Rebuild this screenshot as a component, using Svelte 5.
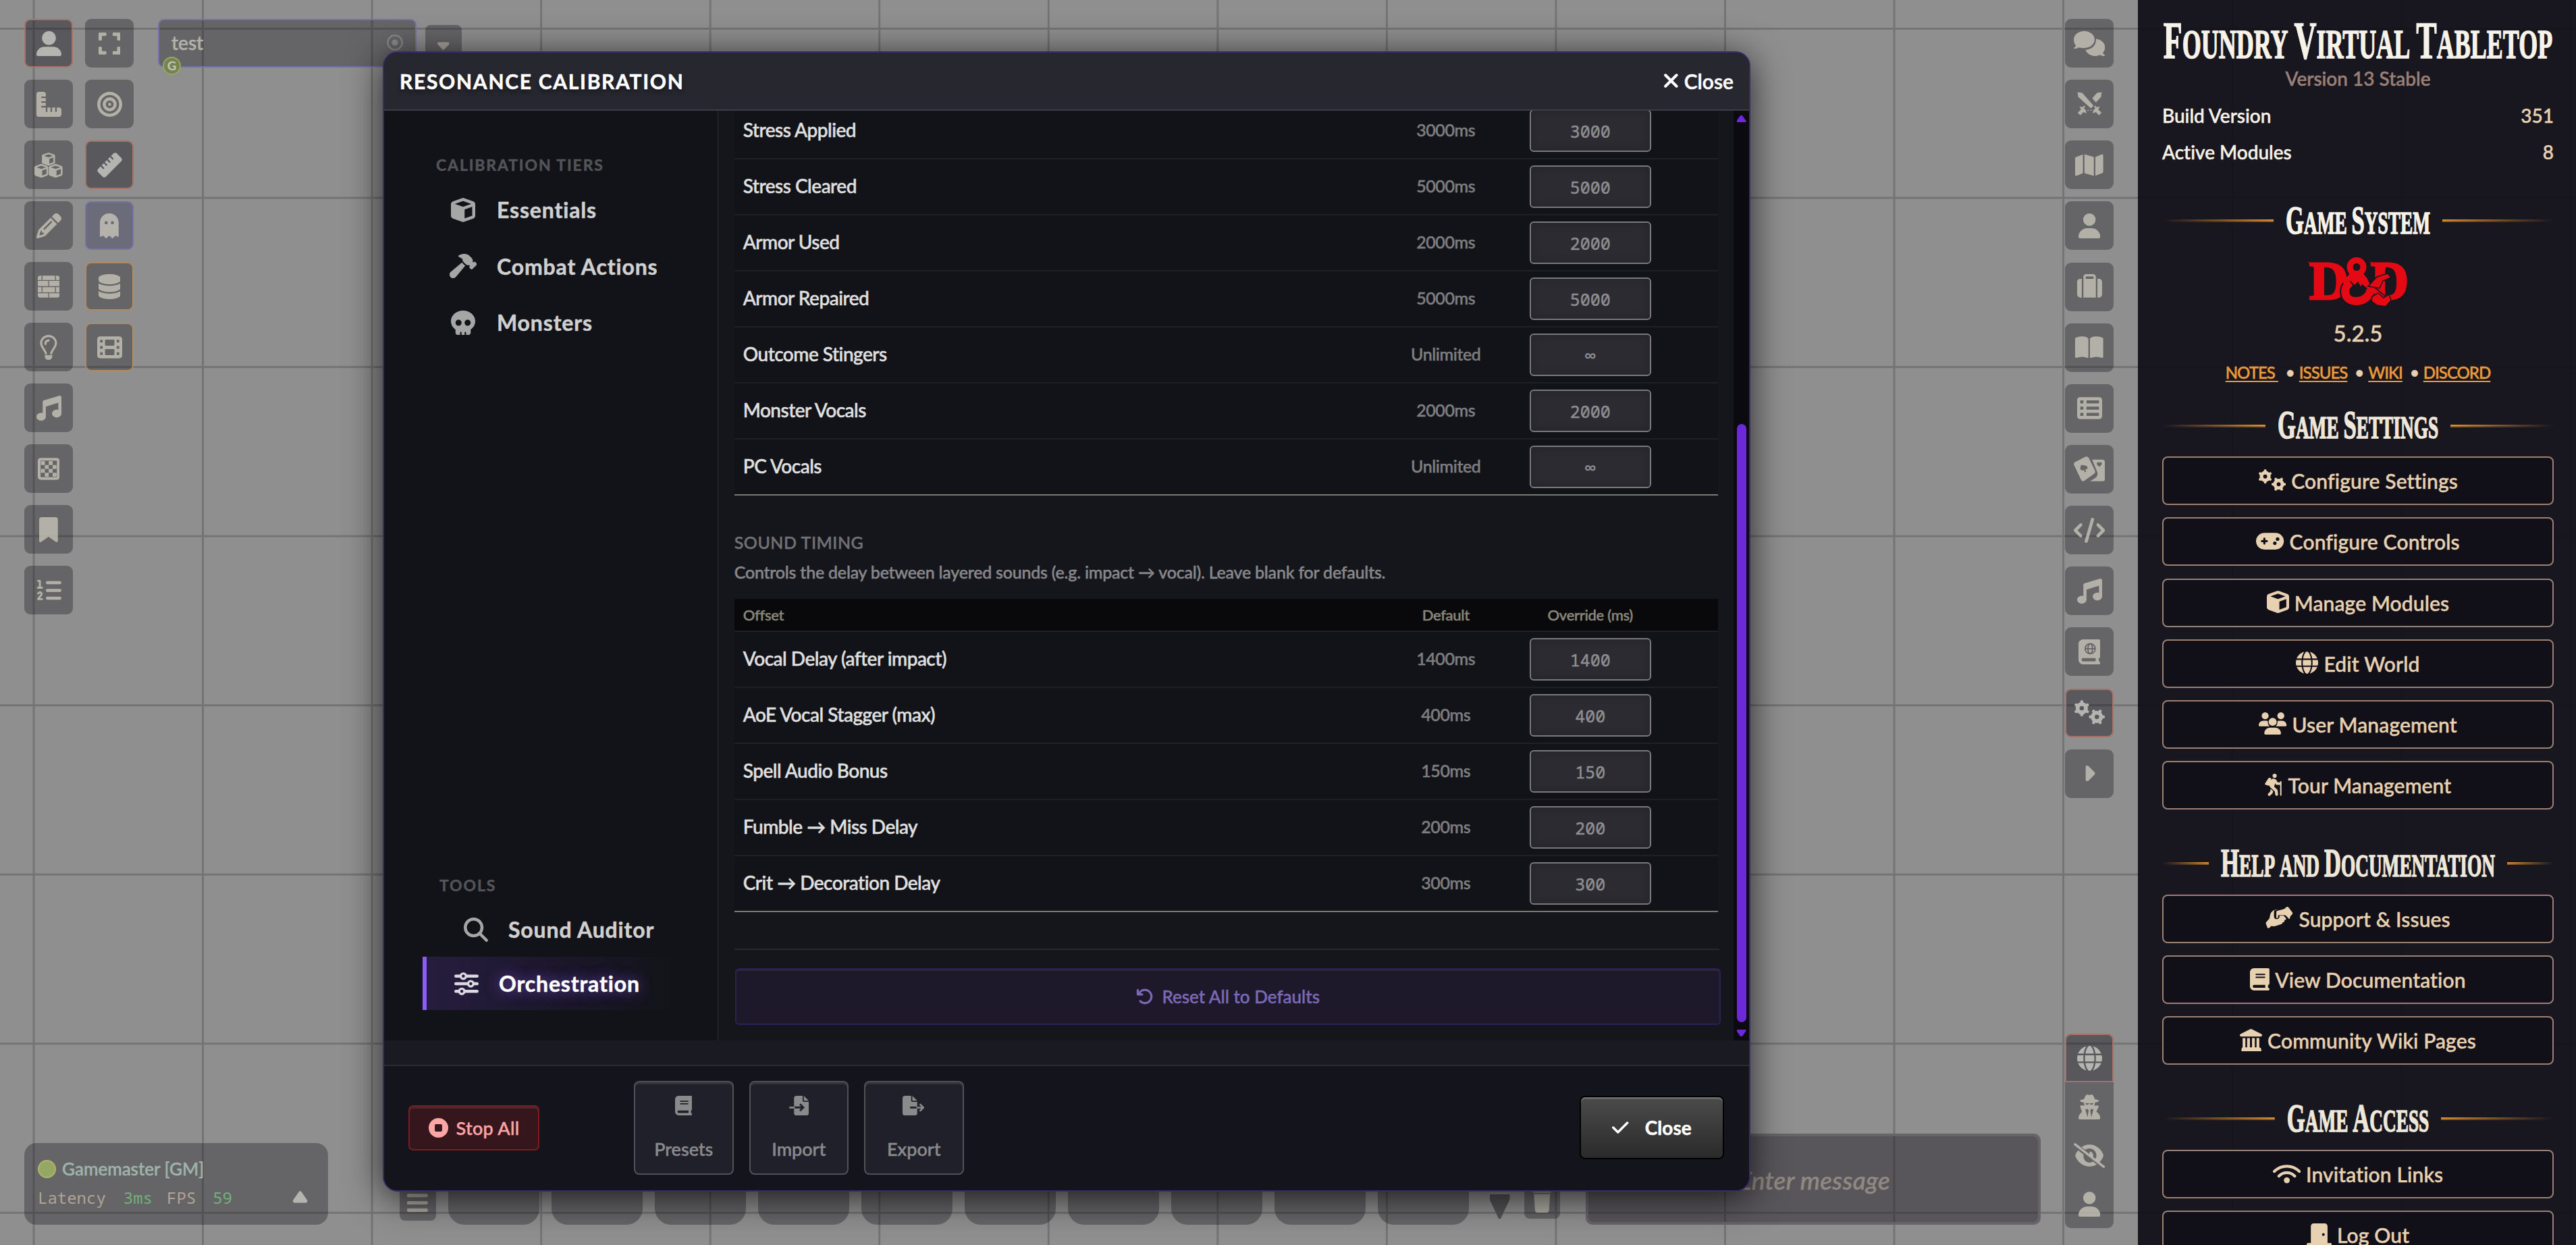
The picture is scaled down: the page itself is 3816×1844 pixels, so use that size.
<script>
  const p = (d) => `<path d="${d}"/>`;
  const line = (d, w) =>
    `<path d="${d}" fill="none" stroke="currentColor" stroke-width="${w}" stroke-linecap="round" stroke-linejoin="round"/>`;

  // ring plus six rounded teeth
  function gear(cx, cy, rot) {
    let teeth = "";
    for (let i = 0; i < 6; i++) {
      const a = ((rot + i * 60) * Math.PI) / 180;
      teeth += `M${cx + 100 * Math.sin(a)} ${cy - 100 * Math.cos(a)}L${cx + 134 * Math.sin(a)} ${cy - 134 * Math.cos(a)}`;
    }
    return `<circle cx="${cx}" cy="${cy}" r="86" fill="none" stroke="currentColor" stroke-width="80"/>` + line(teeth, 62);
  }

  const cubePath =
    "M234.5 5.7c13.9-5 29.1-5 43.1 0l192 68.6C495 83.4 512 107.5 512 134.6l0 242.9c0 27-17 51.2-42.5 60.3l-192 68.6c-13.9 5-29.1 5-43.1 0l-192-68.6C17 428.6 0 404.5 0 377.4L0 134.6c0-27 17-51.2 42.5-60.3l192-68.6zM256 66L82.3 128 256 190l173.7-62L256 66zm32 368.6l160-57.1 0-188L288 246.6l0 188z";
  const userPath =
    "M224 256A128 128 0 1 0 224 0a128 128 0 1 0 0 256zm-45.7 48C79.8 304 0 383.8 0 482.3C0 498.7 13.3 512 29.7 512l388.6 0c16.4 0 29.7-13.3 29.7-29.7C448 383.8 368.2 304 269.7 304l-91.4 0z";
  const corner = "M16 32h128q16 0 16 16v36q0 16-16 16H68v76q0 16-16 16H16q-16 0-16-16V48q0-16 16-16z";
  const bookBody =
    "M96 0C43 0 0 43 0 96L0 416c0 53 43 96 96 96l288 0 32 0c17.7 0 32-14.3 32-32s-14.3-32-32-32l0-64c17.7 0 32-14.3 32-32l0-320c0-17.7-14.3-32-32-32L384 0 96 0zm0 384l256 0 0 64L96 448c-17.7 0-32-14.3-32-32s14.3-32 32-32z";
  const sword =
    '<path d="M8 8l96 14 232 262-54 54L22 104zM262 388l24-24 30 30 58-58-30-30 24-24 34 34 60-16-28 62 66 66-52 52-66-66-62 28 16-60z"/>';

  const icons = {
    userLarge: [512, p("M256 288A144 144 0 1 0 256 0a144 144 0 1 0 0 288zm-94.7 32C72.2 320 0 392.2 0 481.3c0 17 13.8 30.7 30.7 30.7l450.6 0c17 0 30.7-13.8 30.7-30.7C512 392.2 439.8 320 350.7 320l-189.4 0z")],
    user: [448, p(userPath)],
    expand: [448, `${p(corner)}<g transform="translate(448 0) scale(-1 1)">${p(corner)}</g><g transform="translate(0 512) scale(1 -1)">${p(corner)}</g><g transform="translate(448 512) scale(-1 -1)">${p(corner)}</g>`],
    rulerCombined: [512, p("M.2 468.9C2.7 493.1 23.1 512 48 512l96 0 320 0c26.5 0 48-21.5 48-48l0-96c0-26.5-21.5-48-48-48l-48 0 0 80c0 8.8-7.2 16-16 16s-16-7.2-16-16l0-80-64 0 0 80c0 8.8-7.2 16-16 16s-16-7.2-16-16l0-80-64 0 0 80c0 8.8-7.2 16-16 16s-16-7.2-16-16l0-80-80 0c-8.8 0-16-7.2-16-16s7.2-16 16-16l80 0 0-64-80 0c-8.8 0-16-7.2-16-16s7.2-16 16-16l80 0 0-64-80 0c-8.8 0-16-7.2-16-16s7.2-16 16-16l80 0 0-48c0-26.5-21.5-48-48-48L48 0C21.5 0 0 21.5 0 48L0 368l0 96c0 1.7 .1 3.3 .2 4.9z")],
    bullseye: [512, p("M448 256A192 192 0 1 0 64 256a192 192 0 1 0 384 0zM0 256a256 256 0 1 1 512 0A256 256 0 1 1 0 256zm256 80a80 80 0 1 0 0-160 80 80 0 1 0 0 160zm0-224a144 144 0 1 1 0 288 144 144 0 1 1 0-288zM224 256a32 32 0 1 1 64 0 32 32 0 1 1 -64 0z")],
    cubes: [576, `<g transform="translate(154 0) scale(.525)">${p(cubePath)}</g><g transform="translate(0 232) scale(.55)">${p(cubePath)}</g><g transform="translate(294 232) scale(.55)">${p(cubePath)}</g>`],
    ruler: [512, p("M177.9 494.1c-18.7 18.7-49.1 18.7-67.9 0L17.9 401.9c-18.7-18.7-18.7-49.1 0-67.9l50.7-50.7 48 48c6.2 6.2 16.4 6.2 22.6 0s6.2-16.4 0-22.6l-48-48 41.4-41.4 48 48c6.2 6.2 16.4 6.2 22.6 0s6.2-16.4 0-22.6l-48-48 41.4-41.4 48 48c6.2 6.2 16.4 6.2 22.6 0s6.2-16.4 0-22.6l-48-48 41.4-41.4 48 48c6.2 6.2 16.4 6.2 22.6 0s6.2-16.4 0-22.6l-48-48 50.7-50.7c18.7-18.7 49.1-18.7 67.9 0l92.1 92.1c18.7 18.7 18.7 49.1 0 67.9L177.9 494.1z")],
    pencil: [512, p("M410.3 231l11.3-11.3-33.9-33.9-62.1-62.1L291.7 89.8l-11.3 11.3-22.6 22.6L58.6 322.9c-10.4 10.4-18 23.3-22.2 37.4L1 480.7c-2.5 8.4-.2 17.5 6.1 23.7s15.3 8.5 23.7 6.1l120.3-35.4c14.1-4.2 27-11.8 37.4-22.2L387.7 253.7 410.3 231zM160 399.4l-9.1 22.7c-4 3.1-8.5 5.4-13.3 6.9L59.4 452l23-78.1c1.4-4.9 3.8-9.4 6.9-13.3l22.7-9.1 0 32c0 8.8 7.2 16 16 16l32 0zM362.7 18.7L348.3 33.2 325.7 55.8 314.3 67.1l33.9 33.9 62.1 62.1 33.9 33.9 11.3-11.3 22.6-22.6 14.5-14.5c25-25 25-65.5 0-90.5L453.3 18.7c-25-25-65.5-25-90.5 0zm-47.4 168l-144 144c-6.2 6.2-16.4 6.2-22.6 0s-6.2-16.4 0-22.6l144-144c6.2-6.2 16.4-6.2 22.6 0s6.2 16.4 0 22.6z")],
    ghost: [384, p("M40.1 467.1l-11.2 9c-3.2 2.5-7.1 3.9-11.1 3.9C8 480 0 472 0 462.2L0 192C0 86 86 0 192 0S384 86 384 192l0 270.2c0 9.8-8 17.8-17.8 17.8-4 0-7.9-1.4-11.1-3.9l-11.2-9c-13.4-10.7-32.8-9-44.1 3.9L269.3 506c-3.3 3.8-8.2 6-13.3 6s-9.9-2.2-13.3-6l-26.6-30.5c-12.7-14.6-35.4-14.6-48.2 0L141.3 506c-3.3 3.8-8.2 6-13.3 6s-9.9-2.2-13.3-6L84.2 471c-11.3-12.9-30.7-14.6-44.1-3.9zM160 192a32 32 0 1 0 -64 0 32 32 0 1 0 64 0zm96 32a32 32 0 1 0 0-64 32 32 0 1 0 0 64z")],
    bricks: [448, p("M48 32h29v88H0V80q0-48 48-48zM96 32h256v88H96zM371 32h29q48 0 48 48v40h-77zM0 139h215v108H0zM233 139h215v108H233zM0 266h77v107H0zM96 266h256v107H96zM371 266h77v107h-77zM0 392h215v88H48q-48 0-48-48zM233 392h215v40q0 48-48 48H233z")],
    database: [448, p("M448 80l0 48c0 44.2-100.3 80-224 80S0 172.2 0 128L0 80C0 35.8 100.3 0 224 0S448 35.8 448 80zM393.2 214.7c20.8-7.4 39.9-16.9 54.8-28.6L448 288c0 44.2-100.3 80-224 80S0 332.2 0 288L0 186.1c14.9 11.8 34 21.2 54.8 28.6C99.7 230.7 159.5 240 224 240s124.3-9.3 169.2-25.3zM0 346.1c14.9 11.8 34 21.2 54.8 28.6C99.7 390.7 159.5 400 224 400s124.3-9.3 169.2-25.3c20.8-7.4 39.9-16.9 54.8-28.6l0 85.9c0 44.2-100.3 80-224 80S0 476.2 0 432l0-85.9z")],
    bulb: [384, line("M138 384c-8-70-98-130-98-214a152 148 0 0 1 304 0c0 84-90 144-98 214M128 186q0-66 66-74", 44) + p("M116 416h152v16q0 80-76 80t-76-80z")],
    film: [512, '<path fill-rule="evenodd" d="M64 32h384q64 0 64 64v320q0 64-64 64H64q-64 0-64-64V96q0-64 64-64zM176 96q-16 0-16 16v92q0 16 16 16h160q16 0 16-16v-92q0-16-16-16zM176 292q-16 0-16 16v92q0 16 16 16h160q16 0 16-16v-92q0-16-16-16zM60 100h52v56H60zM60 228h52v56H60zM60 356h52v56H60zM400 100h52v56h-52zM400 228h52v56h-52zM400 356h52v56h-52z"/>'],
    music: [512, p("M499.1 6.3c8.1 6 12.9 15.6 12.9 25.7l0 72 0 264c0 44.2-43 80-96 80s-96-35.8-96-80s43-80 96-80c11.2 0 22 1.6 32 4.6L448 147 192 223.8 192 432c0 44.2-43 80-96 80s-96-35.8-96-80s43-80 96-80c11.2 0 22 1.6 32 4.6L128 200l0-72c0-14.1 9.3-26.6 22.8-30.7l320-96c9.7-2.9 20.2-1.1 28.3 5z")],
    chessboard: [448, '<path fill-rule="evenodd" d="M64 32h320q64 0 64 64v320q0 64-64 64H64q-64 0-64-64V96q0-64 64-64zM56 88v336h336V88z"/>' + p("M64 96h80v80H64zM224 96h80v80h-80zM144 176h80v80h-80zM304 176h80v80h-80zM64 256h80v80H64zM224 256h80v80h-80zM144 336h80v80h-80zM304 336h80v80h-80z")],
    bookmark: [384, p("M0 48L0 487.7C0 501.1 10.9 512 24.3 512c5 0 9.9-1.5 14-4.4L192 400 345.7 507.6c4.1 2.9 9 4.4 14 4.4c13.4 0 24.3-10.9 24.3-24.3L384 48c0-26.5-21.5-48-48-48L48 0C21.5 0 0 21.5 0 48z")],
    listOl: [512, line("M224 98h256M224 256h256M224 414h256", 62) + line("M34 60h36v136M30 200h84M34 318q42-44 70-6c18 36-44 70-70 122h82", 40)],
    comments: [640, p("M214 348c118 0 214-78 214-174S332 0 214 0S0 78 0 174c0 60 24 104 46 130c-8 20-28 26-40 34q-12 20 12 22c30 2 64-10 80-26c36 12 76 14 116 14zM458 168c0 130-100 210-220 216c30 76 108 128 200 128c36 0 70-8 100-24c24 16 50 24 84 24q26-4 12-22c-14-10-30-22-38-42c24-28 44-64 44-116c0-84-76-158-182-172z")],
    swords: [512, `${sword}<path d="M504 8l-96 14-98 110 76 86 104-114zM250 388l-24-24-30 30-58-58 30-30-24-24-34 34-60-16 28 62-66 66 52 52 66-66 62 28-16-60z"/>`],
    map: [576, p("M384 476.1L192 421.2l0-385.3L384 90.8l0 385.3zm32-1.2l0-386.5L543.1 37.5c15.8-6.3 32.9 5.3 32.9 22.3l0 334.8c0 9.8-6 18.6-15.1 22.3L416 474.8zM15.1 95.1L160 37.2l0 386.5L32.9 474.5C17.1 480.8 0 469.2 0 452.2L0 117.4c0-9.8 6-18.6 15.1-22.3z")],
    suitcase: [512, p("M176 56l0 40 160 0 0-40c0-4.4-3.6-8-8-8L184 48c-4.4 0-8 3.6-8 8zM128 96l0-40c0-30.9 25.1-56 56-56L328 0c30.9 0 56 25.1 56 56l0 40 0 32 0 352-256 0 0-352 0-32zM64 96l32 0 0 384-32 0c-35.3 0-64-28.7-64-64L0 160c0-35.3 28.7-64 64-64zM448 480l-32 0 0-384 32 0c35.3 0 64 28.7 64 64l0 256c0 35.3-28.7 64-64 64z")],
    bookOpen: [576, p("M249.6 471.5c10.8 3.8 22.4-4.1 22.4-15.5l0-377.4c0-4.2-1.6-8.4-5-11C247.4 52 202.4 32 144 32C93.5 32 46.3 45.3 18.1 56.1C6.8 60.5 0 71.7 0 83.8L0 454.1c0 11.9 12.8 20.2 24.1 16.5C55.6 460.1 105.5 448 144 448c33.9 0 79 14 105.6 23.5zm76.8 0C353 462 398.1 448 432 448c38.5 0 88.4 12.1 119.9 22.6c11.3 3.8 24.1-4.6 24.1-16.5l0-370.3c0-12.1-6.8-23.3-18.1-27.6C529.7 45.3 482.5 32 432 32c-58.4 0-103.4 20-123 35.6c-3.3 2.6-5 6.8-5 11L304 456c0 11.4 11.7 19.3 22.4 15.5z")],
    tableList: [512, '<path fill-rule="evenodd" d="M64 32h384q64 0 64 64v320q0 64-64 64H64q-64 0-64-64V96q0-64 64-64zM64 96v64h64V96zM192 96v64h256V96zM64 224v64h64v-64zM192 224v64h256v-64zM64 352v64h64v-64zM192 352v64h256v-64z"/>'],
    cards: [640, '<path fill-rule="evenodd" d="M24 118L240 8q42-18 66 20l128 264q16 42-18 66L214 502q-40 20-62-16L6 176q-16-38 18-58zM150 176c-12 54-28 62 0 102c22 24 44 6 56-4l20 52 30-14-26-48c20 4 54 0 54-34c-10-46-70-50-134-54z"/>' + '<path fill-rule="evenodd" d="M376 66h210q54 0 54 54v336q0 54-54 54H334l116-74q52-42 32-114zM524 130q-30-28-50 4c-10 34 26 56 50 78c24-22 62-44 50-78q-20-32-50-4z"/>'],
    code: [640, p("M392.8 1.2c-17-4.9-34.7 5-39.6 22l-128 448c-4.9 17 5 34.7 22 39.6s34.7-5 39.6-22l128-448c4.9-17-5-34.7-22-39.6zm80.6 120.1c-12.5 12.5-12.5 32.8 0 45.3L562.7 256l-89.4 89.4c-12.5 12.5-12.5 32.8 0 45.3s32.8 12.5 45.3 0l112-112c12.5-12.5 12.5-32.8 0-45.3l-112-112c-12.5-12.5-32.8-12.5-45.3 0zm-306.7 0c-12.5-12.5-32.8-12.5-45.3 0l-112 112c-12.5 12.5-12.5 32.8 0 45.3l112 112c12.5 12.5 32.8 12.5 45.3 0s12.5-32.8 0-45.3L77.3 256l89.4-89.4c12.5-12.5 12.5-32.8 0-45.3z")],
    book: [448, p(bookBody + "m32-240c0-8.8 7.2-16 16-16l192 0c8.8 0 16 7.2 16 16s-7.2 16-16 16l-192 0c-8.8 0-16-7.2-16-16zm16 48l192 0c8.8 0 16 7.2 16 16s-7.2 16-16 16l-192 0c-8.8 0-16-7.2-16-16s7.2-16 16-16z")],
    atlas: [448, p(bookBody) + '<g fill="none" stroke="#666669" stroke-width="26"><circle cx="240" cy="192" r="104"/><ellipse cx="240" cy="192" rx="46" ry="104"/><path d="M136 192h208"/></g>'],
    gears: [640, gear(164, 166, 0) + gear(474, 344, 30)],
    caretRight: [288, p("M246.6 278.6c12.5-12.5 12.5-32.8 0-45.3l-128-128c-9.2-9.2-22.9-11.9-34.9-6.9s-19.8 16.6-19.8 29.6l0 256c0 12.9 7.8 24.6 19.8 29.6s25.7 2.2 34.9-6.9l128-128z")],
    globe: [512, p("M352 256c0 22.2-1.2 43.6-3.3 64l-185.3 0c-2.2-20.4-3.3-41.8-3.3-64s1.2-43.6 3.3-64l185.3 0c2.2 20.4 3.3 41.8 3.3 64zm28.8-64l123.1 0c5.3 20.5 8.1 41.9 8.1 64s-2.8 43.5-8.1 64l-123.1 0c2.1-20.6 3.2-42 3.2-64s-1.1-43.4-3.2-64zm112.6-32l-116.7 0c-10-63.9-29.8-117.4-55.3-151.6c78.3 20.7 142 77.5 171.9 151.6zm-149.1 0l-176.6 0c6.1-36.4 15.5-68.6 27-94.7c10.5-23.6 22.2-40.7 33.5-51.5C239.4 3.2 248.7 0 256 0s16.6 3.2 27.8 13.8c11.3 10.8 23 27.9 33.5 51.5c11.6 26 20.9 58.2 27 94.7zm-209 0L18.6 160C48.6 85.9 112.2 29.1 190.6 8.4C165.1 42.6 145.3 96.1 135.3 160zM8.1 192l123.1 0c-2.1 20.6-3.2 42-3.2 64s1.1 43.4 3.2 64L8.1 320C2.8 299.5 0 278.1 0 256s2.8-43.5 8.1-64zM194.7 446.6c-11.6-26-20.9-58.2-27-94.6l176.6 0c-6.1 36.4-15.5 68.6-27 94.6c-10.5 23.6-22.2 40.7-33.5 51.5C272.6 508.8 263.3 512 256 512s-16.6-3.2-27.8-13.8c-11.3-10.8-23-27.9-33.5-51.5zM135.3 352c10 63.9 29.8 117.4 55.3 151.6C112.2 482.9 48.6 426.1 18.6 352l116.7 0zm358.1 0c-30 74.1-93.6 130.9-171.9 151.6c25.5-34.2 45.2-87.7 55.3-151.6l116.7 0z")],
    secret: [448, '<path fill-rule="evenodd" d="M30 132c0-16 36-28 84-36C126 50 148 8 172 2c20-4 34 12 52 12s32-16 52-12c24 6 46 48 58 94c48 8 84 20 84 36c0 14-34 26-82 34v20c0 20-10 34-22 42h84q26 8 12 32l-44 94c50 34 82 80 82 130q0 28-28 28H28q-28 0-28-28c0-50 30-96 72-128L36 252q-8-22 16-28h82c-14-10-22-22-22-38v-20c-48-8-82-20-82-34zM144 178c0 22 14 34 34 34s32-10 38-26h16c6 16 18 26 38 26s34-12 34-34q-80 12-160 0zM140 300l44 166 24-130-12-36zM308 300l-44 166-24-130 12-36z"/>'],
    eyeSlash: [640, p("M160 84c46-32 100-52 160-52c150 0 248 112 284 202q8 22 0 44c-16 38-42 82-80 118l-82-64c14-24 22-48 22-76c0-80-64-144-144-144c-32 0-60 10-84 26zM320 176q80 0 80 80q0 20-6 36l-74-58q12-30 0-58zM92 148L200 234c-12 96 46 166 120 166c28 0 54-8 76-22l76 60c-46 28-96 42-152 42C170 480 72 368 36 278q-8-22 0-44c12-30 32-62 56-86z") + line("M26 26L614 486", 48)],
    cube: [512, p(cubePath)],
    hammer: [576, p("M413.5 237.5c-28.2 4.8-58.2-3.6-80-25.4l-38.1-38.1C280.4 159 272 138.8 272 117.6l0-12.1L192.3 62c-5.3-2.9-8.6-8.6-8.3-14.7s3.9-11.5 9.5-14l47.2-21C259.1 4.2 279 0 299.2 0l18.1 0c36.7 0 72 14 98.7 39.1l44.6 42c24.2 22.8 33.2 55.7 26.6 86L503 183l8-8c9.4-9.4 24.6-9.4 33.9 0l24 24c9.4 9.4 9.4 24.6 0 33.9l-88 88c-9.4 9.4-24.6 9.4-33.9 0l-24-24c-9.4-9.4-9.4-24.6 0-33.9l8-8-17.5-17.5zM27.4 377.1L260.9 182.6c3.5 4.9 7.5 9.6 11.8 14l38.1 38.1c6 6 12.4 11.2 19.2 15.7L134.9 484.6c-14.5 17.4-36 27.4-58.6 27.4C34.1 512 0 477.8 0 435.7c0-22.6 10.1-44.1 27.4-58.6z")],
    skull: [512, p("M416 398.9c58.5-41.1 96-104.1 96-174.9C512 100.3 397.4 0 256 0S0 100.3 0 224c0 70.7 37.5 133.8 96 174.9c0 .4 0 .7 0 1.1l0 64c0 26.5 21.5 48 48 48l48 0 0-48c0-8.8 7.2-16 16-16s16 7.2 16 16l0 48 64 0 0-48c0-8.8 7.2-16 16-16s16 7.2 16 16l0 48 48 0c26.5 0 48-21.5 48-48l0-64c0-.4 0-.7 0-1.1zM96 256a64 64 0 1 1 128 0A64 64 0 1 1 96 256zm256-64a64 64 0 1 1 0 128 64 64 0 1 1 0-128z")],
    search: [512, p("M416 208c0 45.9-14.9 88.3-40 122.7L502.6 457.4c12.5 12.5 12.5 32.8 0 45.3s-32.8 12.5-45.3 0L330.7 376c-34.4 25.2-76.8 40-122.7 40C93.1 416 0 322.9 0 208S93.1 0 208 0S416 93.1 416 208zM208 352a144 144 0 1 0 0-288 144 144 0 1 0 0 288z")],
    sliders: [512, line("M32 96h90M258 96h222M32 256h246M414 256h66M32 416h58M226 416h254", 64) + '<g fill="none" stroke="currentColor" stroke-width="48"><circle cx="190" cy="96" r="56"/><circle cx="346" cy="256" r="56"/><circle cx="158" cy="416" r="56"/></g>'],
    stop: [512, '<path fill-rule="evenodd" d="M256 0a256 256 0 1 0 0 512a256 256 0 1 0 0-512zM192 160h128q32 0 32 32v128q0 32-32 32H192q-32 0-32-32V192q0-32 32-32z"/>'],
    fileImport: [512, '<path fill-rule="evenodd" d="M192 0h160v128q0 32 32 32h128v288q0 64-64 64H192q-64 0-64-64V332h182l-44 46 34 34 106-106-106-106-34 34 44 46H128V64q0-64 64-64zM384 0l128 128H384z"/>' + p("M24 284h120v48H24q-24 0-24-24t24-24z")],
    fileExport: [576, '<path fill-rule="evenodd" d="M64 0h160v128q0 32 32 32h128v124H216q-24 0-24 24t24 24h168v116q0 64-64 64H64q-64 0-64-64V64Q0 0 64 0zM256 0l128 128H256z"/>' + line("M384 308h150M464 228l80 80-80 80", 46)],
    rotateLeft: [512, p("M125.7 160l50.3 0c17.7 0 32 14.3 32 32s-14.3 32-32 32L48 224c-17.7 0-32-14.3-32-32L16 64c0-17.7 14.3-32 32-32s32 14.3 32 32l0 51.2L97.6 97.6c87.5-87.5 229.3-87.5 316.8 0s87.5 229.3 0 316.8s-229.3 87.5-316.8 0c-12.5-12.5-12.5-32.8 0-45.3s32.8-12.5 45.3 0c62.5 62.5 163.8 62.5 226.3 0s62.5-163.8 0-226.3s-163.8-62.5-226.3 0L125.7 160z")],
    check: [448, p("M438.6 105.4c12.5 12.5 12.5 32.8 0 45.3l-256 256c-12.5 12.5-32.8 12.5-45.3 0l-128-128c-12.5-12.5-12.5-32.8 0-45.3s32.8-12.5 45.3 0L160 338.7 393.4 105.4c12.5-12.5 32.8-12.5 45.3 0z")],
    xmark: [384, p("M342.6 150.6c12.5-12.5 12.5-32.8 0-45.3s-32.8-12.5-45.3 0L192 210.7 86.6 105.4c-12.5-12.5-32.8-12.5-45.3 0s-12.5 32.8 0 45.3L146.7 256 41.4 361.4c-12.5 12.5-12.5 32.8 0 45.3s32.8 12.5 45.3 0L192 301.3 297.4 406.6c12.5 12.5 32.8 12.5 45.3 0s12.5-32.8 0-45.3L237.3 256 342.6 150.6z")],
    gamepad: [640, p("M192 64C86 64 0 150 0 256S86 448 192 448l256 0c106 0 192-86 192-192s-86-192-192-192L192 64zM496 168a40 40 0 1 1 0 80 40 40 0 1 1 0-80zM392 304a40 40 0 1 1 80 0 40 40 0 1 1 -80 0zM168 200c0-13.3 10.7-24 24-24s24 10.7 24 24l0 32 32 0c13.3 0 24 10.7 24 24s-10.7 24-24 24l-32 0 0 32c0 13.3-10.7 24-24 24s-24-10.7-24-24l0-32-32 0c-13.3 0-24-10.7-24-24s10.7-24 24-24l32 0 0-32z")],
    users: [640, '<circle cx="148" cy="80" r="80"/><circle cx="508" cy="80" r="80"/><circle cx="320" cy="220" r="92"/>' + p("M0 298c0-62 46-106 106-106h70q18 0 34 8c-6 44 6 86 38 120H20Q0 318 0 298zM640 298c0-62-46-106-106-106h-70q-18 0-34 8c6 44-6 86-38 120h228q20-2 20-22zM128 484c0-74 58-132 132-132h120c74 0 132 58 132 132q0 28-28 28H156q-28 0-28-28z")],
    hiking: [416, '<circle cx="226" cy="48" r="48"/>' + p("M80 108q10-20 34-16l20 6q14 6 12 20l-36 144q-4 14-18 12l-70-18Q0 250 4 226zM186 112c50 0 80 20 92 54l16 32h58v-20q16-20 32 0v320q-16 24-32 0V256h-78q-18 0-26-16l-12-22-20 82 62 58q14 12 16 30l10 84q0 34-32 38-28 0-32-28l-10-76-98-88c-24-24-28-46-22-72l24-92q14-42 52-42zM132 344l60 54-14 50-54 54q-24 18-46-2-16-22 2-46l46-46z")],
    hands: [640, '<path d="M28 340L92 268l18-92q16-60 70-92l46-16h60l-70 12q-20 8-20 32v112q8 60 64 60 60-6 62-60v-18h94l52 52q12 26-8 46l-28 6q14 26-8 44l-34 6q6 30-24 40l-108 36q-64 24-124 8l-46 42q-22 18-44-4L16 404q-22-30 12-64z"/><path d="M250 118q4-18 20-24l140-36 34-14 36-36q26-14 48 4l88 116q16 26-2 48l-44 46q0 40-26 60l-72-76q-12-14-30-14H290v50q-8 22-24 22-16-2-18-22z"/>'],
    columns: [512, p("M240 4q16-6 32 0l224 112q24 16 12 44-6 16-28 16H32q-22 0-28-16-12-28 12-44zM64 208h64v216h40V208h64v216h48V208h64v216h40V208h64v216l40 20v30q12 8 12 20 0 18-20 18H52q-20 0-20-18 0-12 10-20v-30l22-20z")],
    wifi: [640, line("M32 218Q152 98 320 98t288 120M138 326q76-78 182-78t182 78", 66) + '<circle cx="320" cy="420" r="68"/>'],
    door: [576, p("M96 64c0-35.3 28.7-64 64-64L416 0c35.3 0 64 28.7 64 64l0 384 64 0c17.7 0 32 14.3 32 32s-14.3 32-32 32l-112 0-288 0L32 512c-17.7 0-32-14.3-32-32s14.3-32 32-32l64 0L96 64zM384 288a32 32 0 1 0 0-64 32 32 0 1 0 0 64z")],
    caretDown: [320, p("M137 407q23 22 46 0l118-124q24-30 19-52-8-23-32-23H32q-24 0-32 23-5 22 19 52z")],
    caretUp: [320, p("M137 116q23-22 46 0l126 182q20 30 6 52-10 18-32 18H37q-22 0-32-18-14-22 6-52z")],
    circleDot: [512, '<circle cx="256" cy="256" r="228" fill="none" stroke="currentColor" stroke-width="48"/><circle cx="256" cy="256" r="98"/>'],
    bars: [448, line("M32 96h384M32 256h384M32 416h384", 76)],
    trash: [448, p("M32 40h384v40H32zM48 110h352l-24 350q-4 52-56 52H128q-52 0-56-52z")]
  };

  // [left column, right column] of the scene controls
  const controls = [
    ["userLarge", "on"], ["expand", ""],
    ["rulerCombined", ""], ["bullseye", ""],
    ["cubes", ""], ["ruler", "on"],
    ["pencil", ""], ["ghost", "toggled"],
    ["bricks", ""], ["database", "module"],
    ["bulb", ""], ["film", "module"],
    ["music", ""], null,
    ["chessboard", ""], null,
    ["bookmark", ""], null,
    ["listOl", ""], null
  ];

  const tabs = ["comments", "swords", "map", "user", "suitcase", "bookOpen", "tableList", "cards", "code", "music", "atlas", "gears", "caretRight"];
  const modes = ["globe", "secret", "eyeSlash", "user"];

  const tiers = [
    ["cube", "Essentials"],
    ["hammer", "Combat Actions"],
    ["skull", "Monsters"]
  ];

  const cooldowns = [
    ["Stress Applied", "3000ms", "3000"],
    ["Stress Cleared", "5000ms", "5000"],
    ["Armor Used", "2000ms", "2000"],
    ["Armor Repaired", "5000ms", "5000"],
    ["Outcome Stingers", "Unlimited", "∞"],
    ["Monster Vocals", "2000ms", "2000"],
    ["PC Vocals", "Unlimited", "∞"]
  ];
  const timings = [
    ["Vocal Delay (after impact)", "1400ms", "1400"],
    ["AoE Vocal Stagger (max)", "400ms", "400"],
    ["Spell Audio Bonus", "150ms", "150"],
    ["Fumble → Miss Delay", "200ms", "200"],
    ["Crit → Decoration Delay", "300ms", "300"]
  ];

  const sections = [
    {
      title: "Game Settings",
      items: [
        ["gears", "Configure Settings"],
        ["gamepad", "Configure Controls"],
        ["cube", "Manage Modules"],
        ["globe", "Edit World"],
        ["users", "User Management"],
        ["hiking", "Tour Management"]
      ]
    },
    {
      title: "Help and Documentation",
      items: [
        ["hands", "Support & Issues"],
        ["book", "View Documentation"],
        ["columns", "Community Wiki Pages"]
      ]
    },
    {
      title: "Game Access",
      items: [
        ["wifi", "Invitation Links"],
        ["door", "Log Out"]
      ]
    }
  ];
</script>

{#snippet icon(name)}
  <svg class="icon" viewBox="0 0 {icons[name][0]} 512" fill="currentColor" style="width: {icons[name][0] / 512}em">
    {@html icons[name][1]}
  </svg>
{/snippet}

{#snippet words(text)}
  {#each text.split(" ") as word}<span class="word" class:low={word === "and"}>{word}</span>{" "}{/each}
{/snippet}

{#snippet heading(text)}
  <h2><i class="rule left"></i><span class="caps">{@render words(text)}</span><i class="rule"></i></h2>
{/snippet}

{#snippet row([label, base, value])}
  <div class="row">
    <span class="label">{label}</span>
    <span class="base">{base}</span>
    <span class="cell"><input type="text" placeholder={value} /></span>
  </div>
{/snippet}

<div class="table">
  <div class="interface">
    <div class="top">
      <div class="controls">
        {#each controls as c}
          {#if c}
            <button class="tile {c[1]}">{@render icon(c[0])}</button>
          {:else}
            <span></span>
          {/if}
        {/each}
      </div>
      <div class="scene">
        <span>test</span>
        {@render icon("circleDot")}
        <b class="badge">G</b>
      </div>
      <button class="scene-menu">{@render icon("caretDown")}</button>
    </div>

    <div class="bottom">
      <div class="players">
        <div class="player"><i class="dot"></i>Gamemaster [GM]</div>
        <div class="perf">
          <span>Latency</span><b class="lat">3ms</b><span>FPS</span><b class="fps">59</b>
          {@render icon("caretUp")}
        </div>
      </div>
      <button class="bar-btn">{@render icon("bars")}</button>
      <div class="slots">
        {#each Array(10) as _}
          <div class="slot"></div>
        {/each}
      </div>
      <i class="page-down"></i>
      <button class="bar-btn trash">{@render icon("trash")}</button>
      <div class="chat">Enter message</div>
    </div>
  </div>

  <div class="tabs">
    {#each tabs as t}
      <button class="tile" class:on={t === "gears"}>{@render icon(t)}</button>
    {/each}
    <div class="modes">
      {#each modes as m, i}
        <button class="tile" class:on={i === 0}>{@render icon(m)}</button>
      {/each}
    </div>
  </div>

  <aside class="sidebar">
    <h1><span class="caps">{@render words("Foundry Virtual Tabletop")}</span></h1>
    <p class="version">Version 13 Stable</p>
    <p class="stat"><span>Build Version</span><b>351</b></p>
    <p class="stat second"><span>Active Modules</span><b>8</b></p>
    <div class="system">
      {@render heading("Game System")}
      <svg class="logo" viewBox="0 0 150 72" fill="#e50914">
        <g font-family="'Liberation Serif', serif" font-weight="700" font-size="80" stroke="#e50914" stroke-width="3">
          <text x="3" y="62" textLength="58" lengthAdjust="spacingAndGlyphs">D</text>
          <text x="94" y="62" textLength="56" lengthAdjust="spacingAndGlyphs">D</text>
        </g>
        <path d="M0 6q8 6 22 4v8q-14 0-22-12zM92 6q8 6 24 4v8q-16 0-24-12z" />
        <!-- dragon ampersand: dark edge first, then the red body -->
        <g fill="none" stroke="#18161f">
          <circle cx="73" cy="14.500" r="10" stroke-width="12" />
          <path stroke-width="16" d="M64 37C51 46 54 66 74 65C86 64 92 56 94 48" />
          <path stroke-width="10" d="M82 36L114 62" />
        </g>
        <g fill="none" stroke="#e50914">
          <circle cx="73" cy="14.500" r="10" stroke-width="9" />
          <path stroke-width="12" d="M64 37C51 46 54 66 74 65C86 64 92 56 94 48" />
          <path stroke-width="7" d="M82 36L114 62" />
        </g>
        <path d="M50 36l10-8 4-6 10-1 9 3 6 8 4 9-9-4-5 6-4-7-5 5-6-6-8 5z" />
        <path stroke="#18161f" stroke-width="1.500" d="M90 43l13-14 16-5 5 6-12 5-5 11zM96 58l9-5 8 7 8-5 3 9-8 9-13-2-8-6z" />
      </svg>
      <p class="number">5.2.5</p>
      <p class="links">
        <a href="#notes">{"NOTES "}</a><i>•</i><a href="#issues">ISSUES</a><i>•</i><a href="#wiki">WIKI</a><i>•</i><a href="#discord">DISCORD</a>
      </p>
    </div>
    {#each sections as s}
      <section>
        {@render heading(s.title)}
        {#each s.items as [ic, label]}
          <button class="wide">{@render icon(ic)}<span>{label}</span></button>
        {/each}
      </section>
    {/each}
  </aside>

  <div class="window">
    <header>
      <h4>RESONANCE CALIBRATION</h4>
      <button class="close">{@render icon("xmark")}<span>Close</span></button>
    </header>
    <div class="body">
      <nav>
        <h5>CALIBRATION TIERS</h5>
        {#each tiers as [ic, label]}
          <div class="item"><span class="ic">{@render icon(ic)}</span>{label}</div>
        {/each}
        <h5 class="tools">TOOLS</h5>
        <div class="item tool"><span class="ic">{@render icon("search")}</span>Sound Auditor</div>
        <div class="item tool active"><span class="ic">{@render icon("sliders")}</span>Orchestration</div>
      </nav>
      <main>
        <div class="rows first">
          {#each cooldowns as r}{@render row(r)}{/each}
        </div>
        <h3>SOUND TIMING</h3>
        <p class="hint">Controls the delay between layered sounds (e.g. impact → vocal). Leave blank for defaults.</p>
        <div class="rows">
          <div class="head">
            <span class="label">Offset</span>
            <span class="base">Default</span>
            <span class="cell">Override (ms)</span>
          </div>
          {#each timings as r}{@render row(r)}{/each}
        </div>
        <hr />
        <button class="reset">{@render icon("rotateLeft")}<span>Reset All to Defaults</span></button>
      </main>
      <div class="scroll">
        <i class="up"></i>
        <div class="thumb"></div>
        <i class="down"></i>
      </div>
    </div>
    <footer>
      <button class="stop">{@render icon("stop")}<span>Stop All</span></button>
      <div class="group">
        <button class="io">{@render icon("book")}<span>Presets</span></button>
        <button class="io">{@render icon("fileImport")}<span>Import</span></button>
        <button class="io">{@render icon("fileExport")}<span>Export</span></button>
      </div>
      <button class="done">{@render icon("check")}<span>Close</span></button>
    </footer>
  </div>
</div>

<style>
  :global(body) {
    background: #8f8f8f;
  }

  * {
    box-sizing: border-box;
  }

  .table {
    --glass: rgba(11, 10, 19, 0.31);
    --sand: #e7d1b1;
    position: relative;
    display: flex;
    width: 3816px;
    height: 1844px;
    overflow: hidden;
    font-family: Lato, "Noto Sans CJK JP", sans-serif;
    font-weight: 500;
    font-variant-ligatures: none;
    -webkit-text-stroke: 0.5px currentColor;
    background-color: #8f8f8f;
    background-image:
      linear-gradient(90deg, #747474 3px, transparent 3px),
      linear-gradient(#747474 3px, transparent 3px);
    background-size: 250.55px 250.55px;
    background-position: 48.5px 41px;
  }

  h1, h2, h3, h4, h5, p {
    margin: 0;
  }

  i {
    font-style: normal;
  }

  button {
    display: flex;
    align-items: center;
    justify-content: center;
    padding: 0;
    border: none;
    background: none;
    color: inherit;
    font: inherit;
  }

  .icon {
    display: block;
    height: 1em;
    flex: none;
  }

  /* canvas interface */
  .interface {
    flex: none;
    display: flex;
    flex-direction: column;
    justify-content: space-between;
    width: 3059px;
    padding: 28px 36px 30px;
  }

  .top {
    display: flex;
    align-items: flex-start;
  }

  .controls {
    display: grid;
    grid-template-columns: 72px 72px;
    gap: 18px;
    margin-right: 36px;
  }

  .tile {
    width: 72px;
    height: 72px;
    border: 2px solid transparent;
    border-radius: 9px;
    background: var(--glass);
    background-clip: border-box;
    background-origin: border-box;
    color: rgba(206, 202, 188, 0.75);
    font-size: 37px;
  }

  .tile.on {
    border-color: #a77368;
    background: rgba(11, 10, 19, 0.41);
    color: #b4b4b0;
  }

  .tile.toggled {
    border-color: #7572ab;
    background: #6b6b79;
  }

  .tile.module {
    border-color: #b08c60;
  }

  .scene {
    position: relative;
    display: flex;
    align-items: center;
    justify-content: space-between;
    width: 383px;
    height: 72px;
    padding: 0 18px;
    border: 2px solid #7572ab;
    border-radius: 9px;
    background: var(--glass);
    color: #b4b1a8;
    font-size: 28px;
  }

  .scene span {
    margin-top: -3px;
  }

  .scene .icon {
    font-size: 24px;
    margin-top: -2px;
    color: #8b8a89;
  }

  .badge {
    position: absolute;
    left: 5px;
    bottom: -13px;
    width: 27px;
    height: 27px;
    border: 2px solid #94a864;
    border-radius: 50%;
    background: #76834f;
    color: #c4c4bc;
    font-size: 18px;
    font-weight: 600;
    line-height: 23px;
    text-align: center;
  }

  .scene-menu {
    width: 54px;
    height: 56px;
    margin: 9px 0 0 13px;
    border-radius: 8px;
    background: var(--glass);
    color: #a9a69e;
    font-size: 28px;
  }

  .bottom {
    display: flex;
    align-items: flex-end;
    height: 135px;
  }

  .players {
    width: 450px;
    height: 121px;
    padding: 20px 30px 0 20px;
    border-radius: 18px;
    background: var(--glass);
  }

  .player {
    display: flex;
    align-items: center;
    gap: 9px;
    height: 36px;
    color: #9fb3aa;
    font-size: 26px;
  }

  .dot {
    width: 27px;
    height: 27px;
    border: 2px solid #b3b26a;
    border-radius: 50%;
    background: #94a864;
  }

  .perf {
    display: flex;
    align-items: center;
    height: 49px;
    color: #b1a395;
    font: 24px "Noto Sans Mono", "DejaVu Sans Mono", monospace;
    -webkit-text-stroke: 0;
  }

  .perf b {
    color: #72b07a;
    font-weight: 400;
  }

  .lat {
    margin: 0 21px 0 26px;
  }

  .fps {
    margin-left: 25px;
  }

  .perf .icon {
    margin-left: auto;
    color: #b4b4b0;
    font-size: 34px;
  }

  .bar-btn {
    width: 54px;
    height: 54px;
    margin: 0 18px 6px 106px;
    border-radius: 8px;
    background: var(--glass);
    color: #aeaba3;
    font-size: 35px;
  }

  .slots {
    display: flex;
    gap: 18px;
  }

  .slot {
    width: 135px;
    height: 135px;
    border-radius: 24px;
    background: var(--glass);
  }

  .page-down {
    width: 30px;
    height: 36px;
    margin: 0 21px 9px 31px;
    background: #535355;
    clip-path: polygon(0 0, 100% 0, 100% 20%, 55% 100%, 45% 100%, 0 20%);
  }

  .trash {
    margin: 0 38px 9px 0;
  }

  .chat {
    width: 674px;
    height: 135px;
    padding-right: 219px;
    border: 4px solid #676468;
    border-radius: 10px;
    background: rgba(29, 26, 36, 0.48);
    background-clip: padding-box;
    color: #928882;
    font-size: 37px;
    font-style: italic;
    line-height: 130px;
    text-align: right;
    letter-spacing: 0.3px;
  }

  /* sidebar tabs */
  .tabs {
    flex: none;
    display: flex;
    flex-direction: column;
    gap: 18.15px;
    width: 108px;
    padding: 28px 36px 25px 0;
  }

  .tabs .tile {
    flex: none;
  }

  .modes {
    margin-top: auto;
    border-radius: 9px;
    background: var(--glass);
  }

  .modes .tile {
    background: none;
    border-radius: 0;
  }

  .modes .tile.on {
    border-radius: 9px 9px 0 0;
    background: rgba(11, 10, 19, 0.15);
  }

  /* sidebar */
  .sidebar {
    flex: 1;
    padding: 34px 33px 0 36px;
    background: rgba(19, 17, 26, 0.96);
  }

  .caps {
    display: inline-block;
    font-family: "Liberation Serif", serif;
    font-weight: 700;
    text-transform: uppercase;
    white-space: nowrap;
    -webkit-text-stroke: 0.9px currentColor;
  }

  .word {
    display: inline-block;
  }

  .word::first-letter {
    font-size: 1.27em;
  }

  .word.low::first-letter {
    font-size: 1em;
  }

  h1 {
    height: 56px;
    color: #f7f3e8;
    font-size: 36px;
    line-height: 56px;
    text-align: center;
  }

  h1 .caps {
    transform: scaleY(1.69);
  }

  h2 {
    display: flex;
    align-items: center;
    gap: 18px;
    height: 40px;
    color: #f7f3e8;
    font-size: 27.3px;
    line-height: 40px;
  }

  h2 .caps {
    transform: translateY(1px) scaleY(1.7);
  }

  .rule {
    flex: 1;
    height: 4px;
    background:
      linear-gradient(270deg, transparent, #e8952f) top / 100% 2px no-repeat,
      linear-gradient(270deg, transparent, #96602a) bottom / 100% 2px no-repeat;
  }

  .rule.left {
    transform: scaleX(-1);
  }

  .version {
    margin-top: 8px;
    color: #9b8177;
    font-size: 28px;
    line-height: 36px;
    text-align: center;
  }

  .stat {
    display: flex;
    justify-content: space-between;
    margin-top: 19px;
    color: #f7f3e8;
    font-size: 28px;
    line-height: 36px;
  }

  .stat.second {
    margin-top: 17.5px;
  }

  .stat b {
    color: var(--sand);
    font-weight: 500;
  }

  .system {
    margin-top: 64.5px;
    text-align: center;
  }

  .logo {
    display: block;
    width: 150px;
    height: 72px;
    margin: 34px auto 0;
    overflow: visible;
  }

  .number {
    margin-top: 19.5px;
    color: var(--sand);
    font-size: 33px;
    line-height: 40px;
  }

  .links {
    display: flex;
    justify-content: center;
    margin: 23.5px 0 42.5px;
    color: var(--sand);
    font-size: 24px;
    letter-spacing: -1px;
    line-height: 32px;
  }

  .links i {
    margin: 0 7px 0 11px;
  }

  .links a {
    color: #ea9a3a;
    text-decoration-thickness: 2px;
    text-underline-offset: 3px;
    white-space: pre;
  }

  section {
    display: flex;
    flex-direction: column;
    gap: 18.2px;
    margin-bottom: 60px;
    color: var(--sand);
  }

  section h2,
  section :global(h2) {
    margin-bottom: 7.5px;
    color: #efe7da;
  }

  .wide {
    gap: 8px;
    height: 72px;
    border: 2px solid #9b8074;
    border-radius: 8px;
    background: #110f18;
    font-size: 30px;
    letter-spacing: 0.15px;
  }

  .wide .icon {
    margin-top: -2px;
    font-size: 33px;
  }

  /* calibration window */
  .window {
    position: absolute;
    left: 567px;
    top: 76px;
    display: flex;
    flex-direction: column;
    width: 2026px;
    height: 1689px;
    border: 2px solid #3a2c68;
    border-radius: 22px;
    background: #1a1a23;
    box-shadow: 0 8px 54px rgba(0, 0, 0, 0.75);
    overflow: hidden;
  }

  header {
    display: flex;
    align-items: center;
    justify-content: space-between;
    height: 86px;
    padding: 0 23px;
    border-bottom: 2px solid #3d3d45;
    background: #272730;
    color: #fff;
    font-size: 30px;
  }

  h4 {
    font-size: 30px;
    letter-spacing: 1.7px;
    text-shadow: 0 4px 6px rgba(0, 0, 0, 0.5);
  }

  .close {
    gap: 7px;
    font-weight: 600;
  }

  .close .icon {
    margin-top: -2px;
    font-size: 33px;
  }

  .body {
    display: flex;
    height: 1377px;
    overflow: hidden;
    background: #15161b;
  }

  nav {
    display: flex;
    flex-direction: column;
    width: 495px;
    padding: 65px 0 45px;
    border-right: 1px solid #2e2f35;
    background: #121318;
  }

  h5 {
    margin: 0 0 10px 77px;
    color: #545458;
    font-size: 23px;
    line-height: 30px;
    letter-spacing: 1.85px;
  }

  .tools {
    margin: auto 0 11px 82px;
  }

  .item {
    display: flex;
    align-items: center;
    gap: 30px;
    height: 83.6px;
    padding-left: 97px;
    color: #d0d0d0;
    font-size: 32px;
    font-weight: 700;
    letter-spacing: 0.85px;
  }

  .ic {
    display: flex;
    justify-content: center;
    width: 40px;
    color: #a6a6a7;
    font-size: 36px;
  }

  .tool {
    gap: 28px;
    height: 79px;
    margin-left: 57px;
    padding-left: 59px;
  }

  .active {
    margin-top: 1px;
    margin-right: 60px;
    padding-left: 39px;
    border-left: 6px solid #8b5cf6;
    background: linear-gradient(90deg, #261d3e, #1a1628 60%, #121318);
    color: #fff;
    text-shadow: 0 0 20px rgba(139, 92, 246, 0.8);
  }

  .active .ic {
    color: #dcd8e4;
  }

  main {
    width: 1505px;
    padding-left: 24px;
  }

  .rows {
    width: 1457px;
    background: #121319;
    border-bottom: 2px solid #7a7971;
  }

  .first {
    margin-top: -11px;
  }

  .row,
  .head {
    display: flex;
    align-items: center;
    height: 83px;
    padding-left: 13px;
    border-bottom: 2px solid #1f2026;
  }

  .row:last-child {
    height: 81px;
    border-bottom: none;
  }

  .label {
    width: 941px;
    margin-top: -3px;
    color: #e0e0e0;
    font-size: 28px;
    letter-spacing: -0.5px;
  }

  .base {
    width: 200px;
    margin-top: -3px;
    color: #7e7e80;
    font-size: 25px;
    letter-spacing: -0.4px;
    text-align: center;
  }

  .cell {
    display: flex;
    justify-content: center;
    width: 228px;
  }

  input {
    width: 180px;
    height: 63px;
    padding: 0;
    border: 2px solid #79797b;
    border-radius: 6px;
    background: #2c2b31;
    box-shadow: inset 0 0 14px rgba(0, 0, 0, 0.2);
    font: 25px "Noto Sans Mono", "DejaVu Sans Mono", monospace;
    text-align: center;
  }

  input::placeholder {
    color: #8e8e92;
    opacity: 1;
  }

  .head {
    height: 49px;
    background: #09090b;
  }

  .head span {
    margin-top: 0;
    color: #8a887c;
    font-size: 22px;
    letter-spacing: -0.3px;
  }

  h3 {
    margin-top: 53px;
    color: #717177;
    font-size: 25px;
    font-weight: 500;
    letter-spacing: 0.5px;
    line-height: 32px;
  }

  .hint {
    margin: 12px 0 24px;
    color: #87878b;
    font-size: 25px;
    letter-spacing: -0.22px;
    line-height: 32px;
    white-space: nowrap;
  }

  hr {
    width: 1459px;
    height: 2px;
    margin: 54px 0 27px;
    border: none;
    background: #27282e;
  }

  .reset {
    gap: 13px;
    width: 1460px;
    height: 84px;
    margin-left: 1px;
    border: 2px solid #2e2055;
    border-radius: 6px;
    background: #1d182a;
    box-shadow: inset 0 2px #2c2838;
    color: #7b68b5;
    font-size: 26px;
  }

  .scroll {
    display: flex;
    flex-direction: column;
    align-items: center;
    width: 23px;
    padding: 7px 0 6px;
    background: #0b0a10;
  }

  .thumb {
    width: 14px;
    height: 886px;
    margin-top: 447px;
    border-radius: 7px;
    background: #6d28d9;
  }

  .up,
  .down {
    width: 14px;
    height: 10px;
    background: #6d28d9;
    clip-path: polygon(40% 0, 60% 0, 100% 80%, 100% 100%, 0 100%, 0 80%);
  }

  .down {
    margin-top: auto;
    transform: scaleY(-1);
  }

  footer {
    display: flex;
    align-items: center;
    height: 186px;
    margin-top: 36px;
    padding: 0 37px 2px 36px;
    border-top: 2px solid #2b2b34;
    background: #14141d;
    font-size: 27px;
  }

  .stop {
    gap: 12px;
    width: 194px;
    height: 67px;
    border: 2px solid #7f1a1f;
    border-radius: 7px;
    background: #35161d;
    box-shadow: inset 0 3px #472a31;
    color: #fca5a5;
    letter-spacing: 0.3px;
  }

  .stop .icon {
    font-size: 29px;
  }

  .group {
    display: flex;
    gap: 23px;
    margin: 0 auto 0 140px;
  }

  .io {
    flex-direction: column;
    gap: 32px;
    width: 147.5px;
    height: 139px;
    padding-top: 2px;
    border: 2px solid #515158;
    border-radius: 8px;
    background: #20202a;
    box-shadow: inset 0 3px #33333b;
    color: #8a8a8d;
    line-height: 36px;
  }

  .io .icon {
    font-size: 29px;
  }

  .done {
    gap: 24px;
    width: 214px;
    height: 94px;
    border: 2px solid #000;
    border-radius: 8px;
    background: linear-gradient(#4b4b4b, #2a2a2a);
    box-shadow: inset 0 3px #686868;
    color: #fff;
    font-size: 28px;
    font-weight: 700;
  }
</style>
